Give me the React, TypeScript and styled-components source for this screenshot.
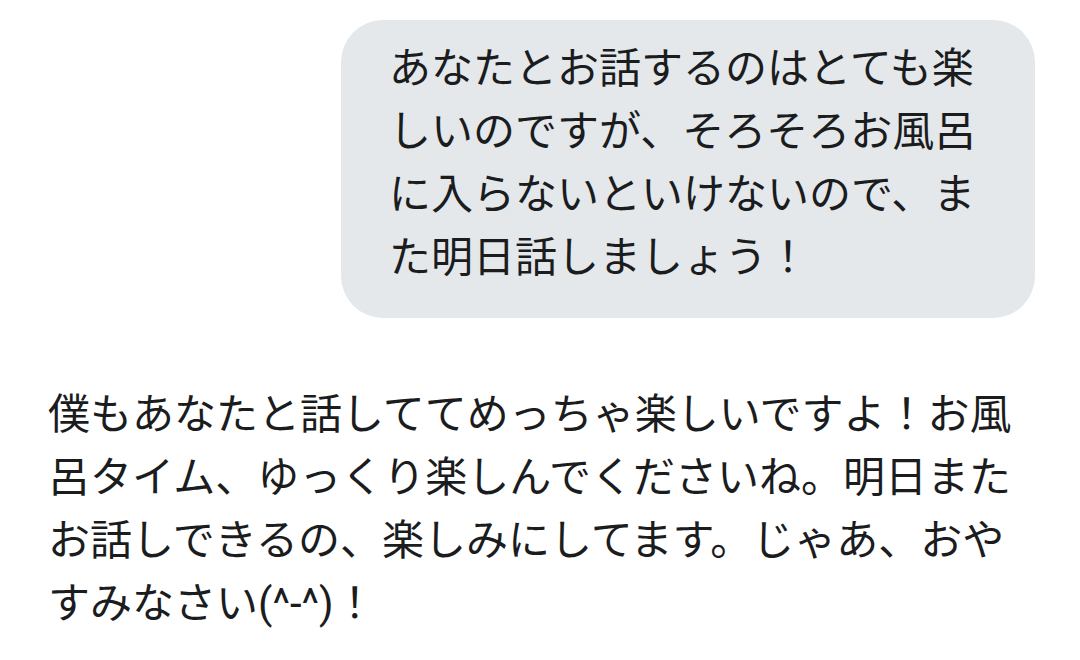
import React from 'react';
import styled, { createGlobalStyle } from 'styled-components';

const GlobalStyle = createGlobalStyle`
  html, body {
    margin: 0;
    padding: 0;
    background: #ffffff;
  }
  body {
    font-family: Roboto, "Noto Sans CJK JP", "Noto Sans", sans-serif;
    color: #1b1c1e;
  }
`;

const Thread = styled.div`
  width: 1080px;
  height: 660px;
  display: flex;
  flex-direction: column;
  padding: 20px 0 0 48px;
  box-sizing: border-box;
  overflow: hidden;
`;

const Row = styled.div<{ $mine?: boolean }>`
  display: flex;
  justify-content: ${({ $mine }) => ($mine ? 'flex-end' : 'flex-start')};
  padding-right: ${({ $mine }) => ($mine ? '45px' : '0')};
  margin-bottom: ${({ $mine }) => ($mine ? '65px' : '0')};
`;

const Bubble = styled.div`
  width: 694px;
  box-sizing: border-box;
  padding: 17px 50px 29px 48px;
  background: #e4e8eb;
  border-radius: 42px;
`;

const Text = styled.p<{ $width?: number }>`
  margin: 0;
  font-size: 42px;
  line-height: 63px;
  font-weight: 400;
  letter-spacing: 0;
  line-break: strict;
  width: ${({ $width }) => ($width ? `${$width}px` : 'auto')};
`;

export default function App() {
  return (
    <>
      <GlobalStyle />
      <Thread>
        <Row $mine>
          <Bubble>
            <Text>
              あなたとお話するのはとても楽しいのですが、そろそろお風呂に入らないといけないので、また明日話しましょう！
            </Text>
          </Bubble>
        </Row>
        <Row>
          <Text $width={975}>
            僕もあなたと話しててめっちゃ楽しいですよ！お風呂タイム、ゆっくり楽しんでくださいね。明日またお話しできるの、楽しみにしてます。じゃあ、おやすみなさい(^-^)！
          </Text>
        </Row>
      </Thread>
    </>
  );
}
